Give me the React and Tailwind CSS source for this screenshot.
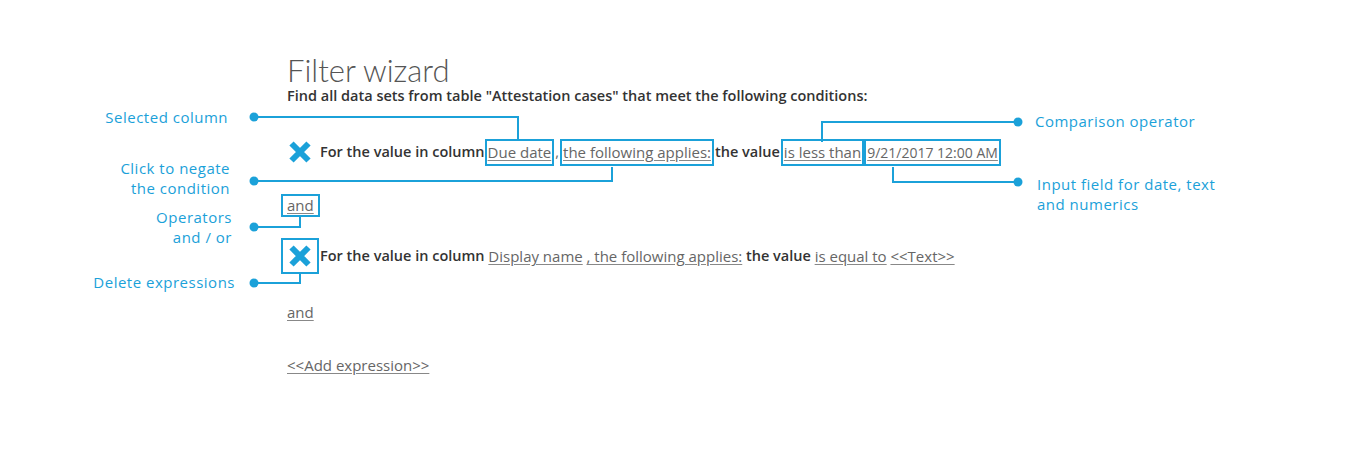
const BLUE = '#1ba1d9'

function XIcon({ boxed }) {
  return (
    <span className={`flex items-center justify-center w-[38px] h-[36px] border-2 ${boxed ? 'border-[#1ba1d9]' : 'border-transparent'}`}>
      <svg width="24" height="24" viewBox="0 0 24 24" aria-hidden="true">
        <path d="M3.5 3.5 L20.5 20.5 M20.5 3.5 L3.5 20.5" stroke={BLUE} strokeWidth="6" strokeLinecap="butt" />
      </svg>
    </span>
  )
}

function Box({ children, narrow }) {
  return (
    <span className="inline-flex items-center h-[27px] px-[1px] border-2 border-[#1ba1d9]">
      <U narrow={narrow}>{children}</U>
    </span>
  )
}

function U({ children, narrow }) {
  return (
    <span className={`underline decoration-[#888] underline-offset-2 text-[#666] font-normal ${narrow ? 'text-[14px]' : 'text-[15px]'}`}>
      {children}
    </span>
  )
}

function Callouts() {
  return (
    <svg className="absolute inset-0 pointer-events-none" width="1367" height="453" aria-hidden="true">
      <g stroke={BLUE} strokeWidth="2" fill="none">
        <polyline points="254,117 518,117 518,140" />
        <polyline points="254,181 612,181 612,167" />
        <polyline points="254,227 300,227 300,217" />
        <polyline points="254,283 300,283 300,274" />
        <polyline points="1018,122 822,122 822,142" />
        <polyline points="1018,182 893,182 893,167" />
      </g>
      <g fill={BLUE}>
        <circle cx="254" cy="117" r="4.5" />
        <circle cx="254" cy="181" r="4.5" />
        <circle cx="254" cy="227" r="4.5" />
        <circle cx="254" cy="283" r="4.5" />
        <circle cx="1018" cy="122" r="4.5" />
        <circle cx="1018" cy="182" r="4.5" />
      </g>
    </svg>
  )
}

function Label({ className, children, align = 'right' }) {
  return (
    <div className={`absolute text-[15px] leading-[20px] tracking-[0.5px] text-[#1ba1d9] font-['Open_Sans',sans-serif] ${align === 'right' ? 'text-right' : 'text-left'} ${className}`}>
      {children}
    </div>
  )
}

export default function App() {
  return (
    <div className="relative w-[1367px] h-[453px] bg-white overflow-hidden font-['Open_Sans',sans-serif]">
      <div className="pl-[281px] pt-[53px] flex flex-col items-start">
        <h1 className="pl-[6px] text-[31px] leading-[34px] font-light text-[#555] font-['Lato',sans-serif]">Filter wizard</h1>
        <p className="pl-[6px] text-[14.5px] leading-[18px] font-semibold text-[#333]">
          Find all data sets from table "Attestation cases" that meet the following conditions:
        </p>

        <div className="mt-[29px] flex items-center h-[36px] text-[14.5px] font-semibold text-[#333] whitespace-pre">
          <XIcon />
          <span className="ml-[1px]">For the value in column</span>
          <Box>Due date</Box>
          <span className="text-[#666] font-normal mx-[1px]">,</span>
          <Box>the following applies:</Box>
          <span className="mx-[1px]">the value</span>
          <Box>is less than</Box>
          <Box narrow>9/21/2017 12:00 AM</Box>
        </div>

        <div className="mt-[24px] flex items-center h-[23px] px-[4px] border-2 border-[#1ba1d9]">
          <U>and</U>
        </div>

        <div className="mt-[21px] flex items-center h-[36px] text-[14.5px] font-semibold text-[#333] whitespace-pre">
          <XIcon boxed />
          <span className="ml-[1px]">For the value in column </span>
          <U>Display name</U>
          <span> </span>
          <U>, the following applies:</U>
          <span> the value </span>
          <U>is equal to</U>
          <span> </span>
          <U>&lt;&lt;Text&gt;&gt;</U>
        </div>

        <div className="mt-[27px] flex items-center h-[23px] px-[4px] border-2 border-transparent">
          <U>and</U>
        </div>

        <div className="mt-[30px] flex items-center h-[23px] px-[4px] border-2 border-transparent">
          <U>&lt;&lt;Add expression&gt;&gt;</U>
        </div>
      </div>

      <Callouts />

      <Label className="right-[1139px] top-[107px]">Selected column</Label>
      <Label className="right-[1137px] top-[158px]">Click to negate<br />the condition</Label>
      <Label className="right-[1135px] top-[207px]">Operators<br />and / or</Label>
      <Label className="right-[1132px] top-[272px]">Delete expressions</Label>
      <Label align="left" className="left-[1035px] top-[111px]">Comparison operator</Label>
      <Label align="left" className="left-[1037px] top-[174px]">Input field for date, text<br />and numerics</Label>
    </div>
  )
}
